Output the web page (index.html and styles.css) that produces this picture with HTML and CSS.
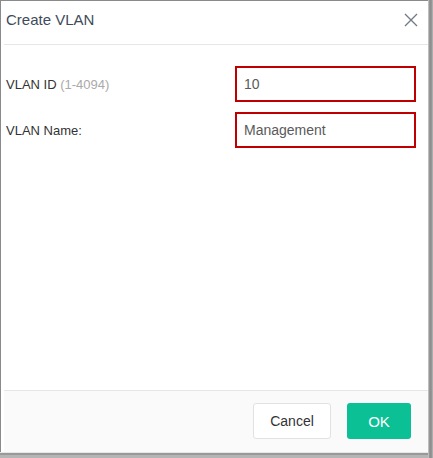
FILE: index.html
```html
<!DOCTYPE html>
<html lang="en">
<head>
    <meta charset="UTF-8">
    <meta name="viewport" content="width=device-width, initial-scale=1.0">
    <title>Create VLAN</title>
    <link rel="stylesheet" href="styles.css">
</head>
<body>
    <div class="dialog">
        <div class="header">
            <span class="title">Create VLAN</span>
            <button class="close" aria-label="Close">
                <svg width="14" height="14" viewBox="0 0 14 14">
                    <path d="M1 1 L13 13 M13 1 L1 13" stroke="#6f7a86" stroke-width="1.3" fill="none"/>
                </svg>
            </button>
        </div>
        <div class="content">
            <div class="row">
                <label class="label">VLAN ID <span class="hint">(1-4094)</span></label>
                <input class="field" type="text" value="10">
            </div>
            <div class="row">
                <label class="label">VLAN Name:</label>
                <input class="field" type="text" value="Management">
            </div>
        </div>
        <div class="footer">
            <button class="btn btn-cancel">Cancel</button>
            <button class="btn btn-ok">OK</button>
        </div>
    </div>
</body>
</html>
```

FILE: styles.css
```css
html, body {
    margin: 0;
    padding: 0;
    background-color: #8c8c8c;
}

body {
    font-family: "Liberation Sans", Arial, sans-serif;
    color: #333;
    width: 433px;
    height: 458px;
    background: linear-gradient(to right, #fff 0, #fff 428px, #e2e2e2 428px, #9a9a9a 429px, #8a8a8a 431px, #b8b8b8 433px);
}

.dialog {
    box-sizing: border-box;
    width: 428px;
    height: 452px;
    background-color: #fff;
    border-top: 1px solid #8a8a8a;
    border-left: 1px solid #8a8a8a;
    box-shadow: 0 1px 0 #e6e6ea, 0 3px 0 #999, 0 6px 0 #b5b5b5;
    display: flex;
    flex-direction: column;
    padding-left: 3px;
}

.header {
    height: 43px;
    display: flex;
    align-items: center;
    justify-content: space-between;
    border-bottom: 1px solid #e6e6e6;
}

.title {
    padding-left: 2px;
    margin-top: -7px;
    font-size: 15px;
    color: #3f4b5a;
}

.close {
    background: none;
    border: none;
    padding: 0;
    margin-right: 10px;
    margin-top: -6px;
    width: 14px;
    height: 14px;
    cursor: pointer;
}

.content {
    flex: 1;
    padding-top: 21px;
    display: flex;
    flex-direction: column;
    gap: 10px;
}

.row {
    display: flex;
    align-items: center;
    justify-content: space-between;
    padding-right: 12px;
}

.label {
    padding-left: 2px;
    font-size: 13px;
    color: #333;
}

.hint {
    color: #aaa;
}

.field {
    box-sizing: border-box;
    width: 181px;
    height: 36px;
    border: 2px solid #c00000;
    padding: 0 7px;
    font-family: inherit;
    font-size: 14px;
    color: #5a5a5a;
    outline: none;
}

.footer {
    height: 62px;
    box-sizing: border-box;
    background-color: #fafafb;
    border-top: 1px solid #e6e6e6;
    display: flex;
    justify-content: flex-end;
    align-items: flex-start;
    gap: 16px;
    padding: 12px 17px 0 0;
}

.btn {
    height: 36px;
    border-radius: 3px;
    font-family: inherit;
    font-size: 14px;
    cursor: pointer;
}

.btn-cancel {
    width: 78px;
    background-color: #fff;
    border: 1px solid #e2e2e2;
    color: #333;
}

.btn-ok {
    width: 64px;
    background-color: #0cc095;
    border: none;
    color: #fff;
    font-size: 15px;
}
```
